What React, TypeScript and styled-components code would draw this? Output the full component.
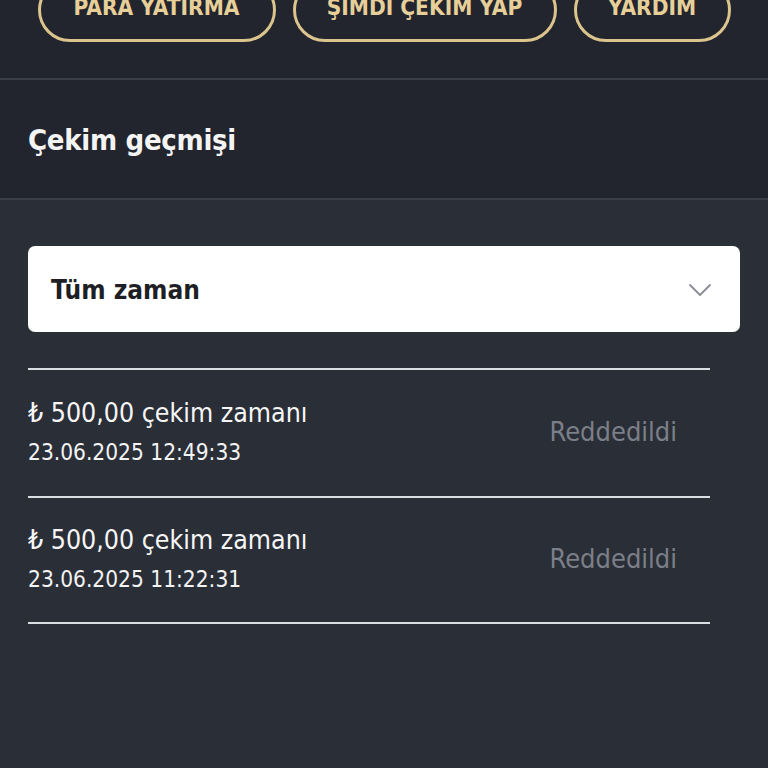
import React from "react";
import styled, { createGlobalStyle } from "styled-components";

const Global = createGlobalStyle`
  html, body { margin: 0; padding: 0; background: #2a2e37; }
  body { font-family: "DejaVu Sans Condensed", "DejaVu Sans", sans-serif; overflow: hidden; }
`;

const Page = styled.div`
  width: 768px;
  height: 768px;
  background: #2a2e37;
  display: flex;
  flex-direction: column;
`;

const TopBar = styled.div`
  background: #22252d;
  height: 78px;
  display: flex;
  justify-content: center;
  align-items: flex-end;
  gap: 17px;
  border-bottom: 2px solid #3b3f49;
  overflow: hidden;
`;

const GoldButton = styled.button<{ $w: number }>`
  width: ${(p) => p.$w}px;
  height: 64px;
  margin-bottom: 36px;
  flex-shrink: 0;
  box-sizing: border-box;
  border: 3px solid #dcc48d;
  border-radius: 32px;
  background: transparent;
  color: #e6cf98;
  font-family: "DejaVu Sans Condensed", "DejaVu Sans", sans-serif;
  font-weight: bold;
  font-size: 22.5px;
  text-transform: uppercase;
  display: flex;
  align-items: center;
  justify-content: center;
  padding: 0;
  padding-bottom: 6px;
`;

const TitleSection = styled.div`
  background: #22252d;
  height: 120px;
  box-sizing: border-box;
  padding: 2px 28px 0 28px;
  display: flex;
  align-items: center;
  border-bottom: 2px solid #3b3f49;
`;

const Title = styled.h1`
  margin: 0;
  color: #f4f4f4;
  font-size: 29px;
  font-weight: 600;
  font-family: "DejaVu Sans Condensed", "DejaVu Sans", sans-serif;
  letter-spacing: -0.3px;
`;

const Content = styled.div`
  padding: 46px 28px 0 28px;
  display: flex;
  flex-direction: column;
`;

const Select = styled.div`
  height: 86px;
  background: #ffffff;
  border-radius: 7px;
  display: flex;
  align-items: center;
  justify-content: space-between;
  padding: 2px 28px 0 23px;
  box-sizing: border-box;
`;

const SelectLabel = styled.span`
  font-size: 26px;
  font-weight: bold;
  color: #1d1f24;
`;

const List = styled.div`
  margin-top: 36px;
  width: 682px;
  border-top: 2px solid #dadde2;
`;

const Row = styled.div<{ $h: number }>`
  height: ${(p) => p.$h}px;
  border-bottom: 2px solid #dadde2;
  display: flex;
  align-items: center;
  justify-content: space-between;
  padding: 0 33px 4px 0;
  box-sizing: border-box;
`;

const RowInfo = styled.div`
  display: flex;
  flex-direction: column;
  gap: 11px;
`;

const Amount = styled.span`
  color: #f6f6f6;
  font-size: 26.5px;
`;

const DateText = styled.span`
  color: #f3f3f3;
  font-size: 22.5px;
`;

const Status = styled.span`
  color: #7b7f87;
  font-size: 27px;
`;

const rows = [
  { amount: "₺ 500,00 çekim zamanı", date: "23.06.2025 12:49:33", h: 128 },
  { amount: "₺ 500,00 çekim zamanı", date: "23.06.2025 11:22:31", h: 126 },
];

export default function App() {
  return (
    <Page>
      <Global />
      <TopBar>
        <GoldButton $w={238}>Para Yatırma</GoldButton>
        <GoldButton $w={264}>ŞIMDI ÇEKIM YAP</GoldButton>
        <GoldButton $w={157}>Yardım</GoldButton>
      </TopBar>
      <TitleSection>
        <Title>Çekim geçmişi</Title>
      </TitleSection>
      <Content>
        <Select>
          <SelectLabel>Tüm zaman</SelectLabel>
          <svg width="24" height="14" viewBox="0 0 24 14" fill="none">
            <path d="M2 2 L12 12 L22 2" stroke="#8a8d93" strokeWidth="1.8" strokeLinecap="round" strokeLinejoin="round" />
          </svg>
        </Select>
        <List>
          {rows.map((r, i) => (
            <Row key={i} $h={r.h}>
              <RowInfo>
                <Amount>{r.amount}</Amount>
                <DateText>{r.date}</DateText>
              </RowInfo>
              <Status>Reddedildi</Status>
            </Row>
          ))}
        </List>
      </Content>
    </Page>
  );
}
